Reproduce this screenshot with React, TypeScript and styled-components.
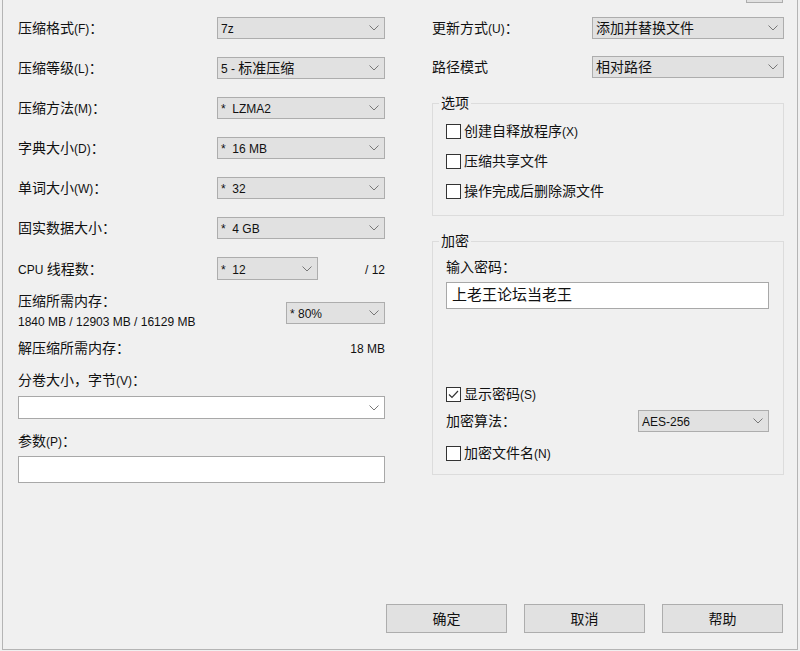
import React from "react";
import styled, { createGlobalStyle } from "styled-components";

const Global = createGlobalStyle`
  html, body { margin: 0; padding: 0; background: #f0f0f0; }
  body { font-family: "Liberation Sans", "Noto Sans CJK SC", sans-serif; color: #111; }
  * { box-sizing: border-box; }
`;

const CJK_RE = /([\u2E80-\u9FFF\u3000-\u303F\uFF00-\uFFEF]+)/;

const Cjk = styled.span<{ $size?: number }>`
  font-family: "Noto Sans CJK SC", sans-serif;
  font-size: ${(p) => p.$size ?? 14}px;
  line-height: 1;
`;

const Lat = styled.span<{ $size?: number }>`
  font-family: "Liberation Sans", sans-serif;
  font-size: ${(p) => p.$size ?? 12}px;
  line-height: 1;
  white-space: pre;
`;

const T = ({ s, cjk, lat }: { s: string; cjk?: number; lat?: number }) => {
  const parts = s.split(CJK_RE).filter(Boolean);
  return (
    <>
      {parts.map((p, i) =>
        CJK_RE.test(p) ? (
          <Cjk key={i} $size={cjk}>{p}</Cjk>
        ) : (
          <Lat key={i} $size={lat}>{p}</Lat>
        )
      )}
    </>
  );
};

const Window = styled.div`
  margin-left: 2px;
  width: 796px;
  height: 650px;
  border-left: 1px solid #b4b4b4;
  border-right: 1px solid #b4b4b4;
  border-bottom: 1px solid #b4b4b4;
  display: flex;
  flex-direction: column;
`;

const TopBar = styled.div`
  display: flex;
  justify-content: flex-end;
  padding-right: 14px;
  height: 3px;
`;

const StubButton = styled.div`
  width: 37px;
  height: 3px;
  background: #e1e1e1;
  border: 1px solid #adadad;
  border-top: none;
`;

const Columns = styled.div`
  display: flex;
  gap: 47px;
  padding: 0 13px 0 15px;
  margin-top: 14px;
`;

const LeftCol = styled.div`
  width: 367px;
  display: flex;
  flex-direction: column;
`;

const RightCol = styled.div`
  width: 352px;
  display: flex;
  flex-direction: column;
`;

const FieldRow = styled.div<{ $mt?: number; $h?: number }>`
  display: flex;
  align-items: center;
  justify-content: space-between;
  height: ${(p) => p.$h ?? 22}px;
  margin-top: ${(p) => p.$mt ?? 0}px;
`;

const CpuRow = styled.div<{ $mt?: number }>`
  display: grid;
  grid-template-columns: 199px 101px 1fr;
  align-items: center;
  height: 23px;
  margin-top: ${(p) => p.$mt ?? 0}px;
`;

const Label = styled.div`
  display: block;
  height: 20px;
  line-height: 20px;
  white-space: nowrap;
`;

const RightText = styled.div`
  display: block;
  text-align: right;
  height: 20px;
  line-height: 20px;
`;

const MemRow = styled.div<{ $mt?: number }>`
  display: flex;
  align-items: flex-start;
  justify-content: space-between;
  margin-top: ${(p) => p.$mt ?? 0}px;
`;

const MemText = styled.div`
  display: flex;
  flex-direction: column;
`;

const SelectWrap = styled.div<{ $mt?: number }>`
  margin-top: ${(p) => p.$mt ?? 0}px;
`;

const SelectBox = styled.div<{ $w?: number; $h?: number; $white?: boolean }>`
  display: flex;
  align-items: center;
  justify-content: space-between;
  width: ${(p) => (p.$w ? `${p.$w}px` : "100%")};
  height: ${(p) => p.$h ?? 22}px;
  padding: 0 5px 0 3px;
  background: ${(p) => (p.$white ? "#ffffff" : "#e1e1e1")};
  border: 1px solid ${(p) => (p.$white ? "#a8a8a8" : "#adadad")};
  color: #111;
`;

const SelectValue = styled.div`
  display: block;
  line-height: 20px;
  height: 20px;
  white-space: pre;
`;

const Chevron = () => (
  <svg width="10" height="6" viewBox="0 0 10 6">
    <polyline points="0.5,0.5 5,5 9.5,0.5" fill="none" stroke="#777" strokeWidth="1" />
  </svg>
);

const Select = ({ value, w, h, white }: { value: string; w?: number; h?: number; white?: boolean }) => (
  <SelectBox $w={w} $h={h} $white={white}>
    <SelectValue>
      <T s={value} />
    </SelectValue>
    <Chevron />
  </SelectBox>
);

const TextInput = styled.div<{ $mt?: number; $w?: number }>`
  display: block;
  width: ${(p) => (p.$w ? `${p.$w}px` : "100%")};
  height: 27px;
  line-height: 24px;
  margin-top: ${(p) => p.$mt ?? 0}px;
  padding-left: 5px;
  background: #fff;
  border: 1px solid #a8a8a8;
`;

const Group = styled.fieldset<{ $mt?: number; $pb?: number }>`
  margin: ${(p) => p.$mt ?? 0}px 0 0 0;
  padding: 0 14px ${(p) => p.$pb ?? 0}px 13px;
  border: 1px solid #dcdcdc;
  min-width: 0;
  display: flex;
  flex-direction: column;
`;

const Legend = styled.legend`
  margin-left: -7px;
  padding: 0 2px;
  line-height: 20px;
  height: 20px;
`;

const CheckRow = styled.div<{ $mt?: number }>`
  display: flex;
  align-items: center;
  gap: 3px;
  height: 20px;
  margin-top: ${(p) => p.$mt ?? 0}px;
`;

const Box = styled.div`
  width: 15px;
  height: 15px;
  border: 1px solid #333;
  background: #fff;
  display: flex;
  align-items: center;
  justify-content: center;
`;

const CheckLabel = styled.div`
  display: block;
  height: 20px;
  line-height: 20px;
  white-space: nowrap;
`;

const Check = ({ label, checked, mt }: { label: string; checked?: boolean; mt?: number }) => (
  <CheckRow $mt={mt}>
    <Box>
      {checked && (
        <svg width="11" height="9" viewBox="0 0 11 9">
          <polyline points="1,4.5 4,7.5 10,1" fill="none" stroke="#333" strokeWidth="1.2" />
        </svg>
      )}
    </Box>
    <CheckLabel>
      <T s={label} />
    </CheckLabel>
  </CheckRow>
);

const ButtonRow = styled.div`
  display: flex;
  justify-content: flex-end;
  gap: 17px;
  margin-top: auto;
  padding-right: 14px;
  margin-bottom: 16px;
`;

const Button = styled.div`
  width: 121px;
  height: 29px;
  line-height: 27px;
  text-align: center;
  background: #e1e1e1;
  border: 1px solid #adadad;
`;

export default function App() {
  return (
    <>
      <Global />
      <Window>
        <TopBar>
          <StubButton />
        </TopBar>
        <Columns>
          <LeftCol>
            <FieldRow>
              <Label><T s="压缩格式(F)：" /></Label>
              <Select w={168} value="7z" />
            </FieldRow>
            <FieldRow $mt={18}>
              <Label><T s="压缩等级(L)：" /></Label>
              <Select w={168} value="5 - 标准压缩" />
            </FieldRow>
            <FieldRow $mt={18}>
              <Label><T s="压缩方法(M)：" /></Label>
              <Select w={168} value="*  LZMA2" />
            </FieldRow>
            <FieldRow $mt={18}>
              <Label><T s="字典大小(D)：" /></Label>
              <Select w={168} value="*  16 MB" />
            </FieldRow>
            <FieldRow $mt={18}>
              <Label><T s="单词大小(W)：" /></Label>
              <Select w={168} value="*  32" />
            </FieldRow>
            <FieldRow $mt={18}>
              <Label><T s="固实数据大小：" /></Label>
              <Select w={168} value="*  4 GB" />
            </FieldRow>
            <CpuRow $mt={18}>
              <Label><T s="CPU 线程数：" /></Label>
              <Select w={101} h={23} value="*  12" />
              <RightText><T s="/ 12" /></RightText>
            </CpuRow>
            <MemRow $mt={11}>
              <MemText>
                <Label><T s="压缩所需内存：" /></Label>
                <Label><T s="1840 MB / 12903 MB / 16129 MB" /></Label>
              </MemText>
              <SelectWrap $mt={11}>
                <Select w={99} value="* 80%" />
              </SelectWrap>
            </MemRow>
            <FieldRow $mt={7} $h={20}>
              <Label><T s="解压缩所需内存：" /></Label>
              <RightText><T s="18 MB" /></RightText>
            </FieldRow>
            <FieldRow $mt={12} $h={20}>
              <Label><T s="分卷大小，字节(V)：" /></Label>
            </FieldRow>
            <SelectWrap $mt={6}>
              <Select white h={23} value="" />
            </SelectWrap>
            <FieldRow $mt={12} $h={20}>
              <Label><T s="参数(P)：" /></Label>
            </FieldRow>
            <TextInput $mt={5} />
          </LeftCol>
          <RightCol>
            <FieldRow>
              <Label><T s="更新方式(U)：" /></Label>
              <Select w={192} value="添加并替换文件" />
            </FieldRow>
            <FieldRow $mt={17}>
              <Label><T s="路径模式" /></Label>
              <Select w={192} value="相对路径" />
            </FieldRow>
            <Group $mt={15} $pb={14}>
              <Legend><T s="选项" /></Legend>
              <Check mt={8} label="创建自释放程序(X)" />
              <Check mt={10} label="压缩共享文件" />
              <Check mt={10} label="操作完成后删除源文件" />
            </Group>
            <Group $mt={15} $pb={11}>
              <Legend><T s="加密" /></Legend>
              <FieldRow $mt={6} $h={20}>
                <Label><T s="输入密码：" /></Label>
              </FieldRow>
              <TextInput $mt={5}>
                <T s="上老王论坛当老王" cjk={15} />
              </TextInput>
              <Check mt={75} checked label="显示密码(S)" />
              <FieldRow $mt={6}>
                <Label><T s="加密算法：" /></Label>
                <Select w={131} value="AES-256" />
              </FieldRow>
              <Check mt={11} label="加密文件名(N)" />
            </Group>
          </RightCol>
        </Columns>
        <ButtonRow>
          <Button><T s="确定" /></Button>
          <Button><T s="取消" /></Button>
          <Button><T s="帮助" /></Button>
        </ButtonRow>
      </Window>
    </>
  );
}
